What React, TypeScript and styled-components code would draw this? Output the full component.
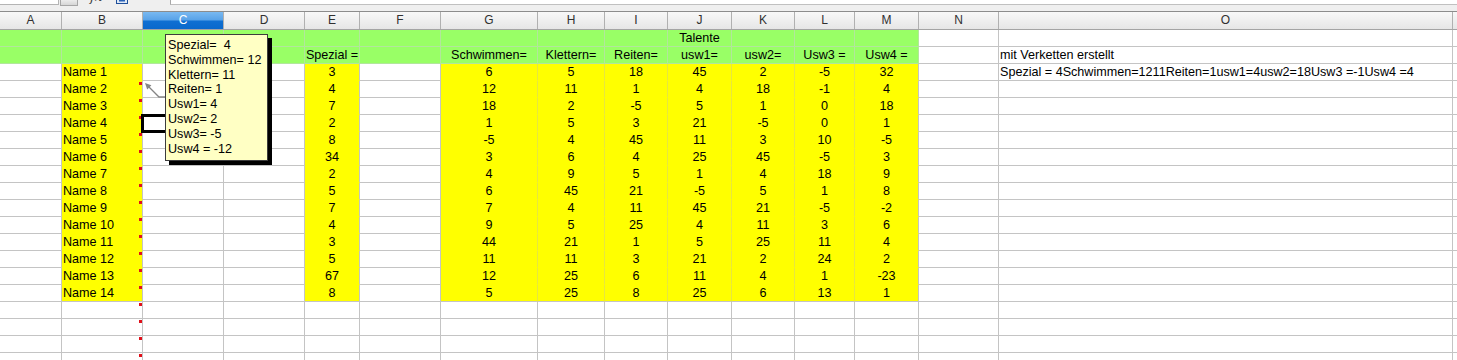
import React from 'react';
import styled, { createGlobalStyle, css } from 'styled-components';

const GlobalStyle = createGlobalStyle`
  html, body { margin: 0; padding: 0; background: #ffffff; overflow: hidden; }
  body { font-family: "Liberation Sans", Arial, sans-serif; }
`;

const COLS = [62, 81, 81, 81, 55, 81, 97, 67, 63, 64, 63, 60, 64, 80, 454, 60];
const LETTERS = ['A', 'B', 'C', 'D', 'E', 'F', 'G', 'H', 'I', 'J', 'K', 'L', 'M', 'N', 'O', ''];
const TEMPLATE = COLS.map((w) => `${w}px`).join(' ');

const GREEN = '#99ff66';
const YELLOW = '#ffff00';
const GRID = '#c4c4c4';
const GREEN_LINE = '#b2e69c';
const YELLOW_LINE = '#e6e640';

type Bg = 'white' | 'green' | 'yellow';
interface CellData {
  text?: string;
  bg: Bg;
  align: 'left' | 'center';
}

const Page = styled.div`
  position: relative;
  width: 1457px;
  height: 360px;
  overflow: hidden;
  background: #ffffff;
`;

const Toolbar = styled.div`
  display: flex;
  align-items: flex-start;
  height: 11px;
  background: #efefef;
  overflow: hidden;
`;

const ToolLeft = styled.div`
  display: flex;
  align-items: flex-start;
  width: 170px;
  flex: none;
`;

const NameBox = styled.div`
  width: 58px;
  height: 4px;
  background: #ffffff;
  border-right: 1px solid #b4b4b4;
  border-bottom: 1px solid #b4b4b4;
`;

const DropButton = styled.div`
  width: 16px;
  height: 5px;
  margin-left: 1px;
  background: linear-gradient(#ececec, #d6d6d6);
  border: 1px solid #a6a6a6;
  border-top: none;
`;

const FxGlyph = styled.span`
  margin-left: 12px;
  margin-top: -11px;
  font-family: "DejaVu Serif", serif;
  font-style: italic;
  font-size: 13px;
  line-height: 16px;
  color: #3a3a3a;
`;

const SumIcon = styled.svg`
  margin-left: 14px;
  flex: none;
`;

const FormulaInput = styled.div`
  flex: 1;
  height: 4px;
  background: #ffffff;
  border-left: 1px solid #a8a8a8;
  border-bottom: 1px solid #c0c0c0;
`;

const HeaderRow = styled.div`
  display: grid;
  grid-template-columns: ${TEMPLATE};
  border-top: 1px solid #8c8c8c;
  border-bottom: 1px solid #a4a4a4;
`;

const HeaderCell = styled.div<{ $selected?: boolean }>`
  height: 17px;
  border-right: 1px solid #b0b0b0;
  background: linear-gradient(#f8f8f8, #e6e6e6);
  color: #303030;
  font-size: 12px;
  line-height: 17px;
  text-align: center;
  ${(p) =>
    p.$selected &&
    css`
      background: linear-gradient(#79b9f1 0%, #5aa3e8 45%, #0f6fd2 55%, #0a68cc 100%);
      color: #ffffff;
    `}
`;

const SheetGrid = styled.div`
  display: grid;
  grid-template-columns: ${TEMPLATE};
  grid-auto-rows: 17px;
`;

const Cell = styled.div<{ $bg: string; $right: string; $bottom: string; $align: string; $centered: boolean }>`
  position: relative;
  height: 16px;
  background: ${(p) => p.$bg};
  border-right: 1px solid ${(p) => p.$right};
  border-bottom: 1px solid ${(p) => p.$bottom};
  font-size: 12.6px;
  line-height: 16px;
  color: #000000;
  text-align: ${(p) => p.$align};
  padding: ${(p) => (p.$centered ? '0' : '0 1px')};
  white-space: pre;
`;

const NoteMark = styled.span`
  position: absolute;
  top: 1px;
  right: 0;
  width: 3px;
  height: 3px;
  background: #e0101a;
`;

const CursorFrame = styled.span`
  position: absolute;
  top: -1px;
  left: -2px;
  right: -2px;
  bottom: -2px;
  border: 3px solid #000000;
  z-index: 2;
`;

const Comment = styled.div`
  position: absolute;
  left: 165px;
  top: 34px;
  width: 103px;
  height: 127px;
  box-sizing: border-box;
  background: #ffffc4;
  border: 1px solid #3c3c3c;
  box-shadow: 4px 4px 0 #000000;
  padding: 3px 0 0 2px;
  font-size: 12.6px;
  line-height: 14.8px;
  color: #000000;
  z-index: 5;
`;

const CommentLine = styled.div`
  white-space: pre;
`;

const Callout = styled.svg`
  position: absolute;
  left: 140px;
  top: 78px;
  z-index: 4;
`;

const namesE = [3, 4, 7, 2, 8, 34, 2, 5, 7, 4, 3, 5, 67, 8];
const dataGM = [
  [6, 5, 18, 45, 2, -5, 32],
  [12, 11, 1, 4, 18, -1, 4],
  [18, 2, -5, 5, 1, 0, 18],
  [1, 5, 3, 21, -5, 0, 1],
  [-5, 4, 45, 11, 3, 10, -5],
  [3, 6, 4, 25, 45, -5, 3],
  [4, 9, 5, 1, 4, 18, 9],
  [6, 45, 21, -5, 5, 1, 8],
  [7, 4, 11, 45, 21, -5, -2],
  [9, 5, 25, 4, 11, 3, 6],
  [44, 21, 1, 5, 25, 11, 4],
  [11, 11, 3, 21, 2, 24, 2],
  [12, 25, 6, 11, 4, 1, -23],
  [5, 25, 8, 25, 6, 13, 1],
];

const blankRow = (): CellData[] => COLS.map(() => ({ bg: 'white', align: 'center' }));

function buildRows(): CellData[][] {
  const rows: CellData[][] = [];
  const g1 = blankRow();
  for (let c = 0; c < 13; c++) g1[c].bg = 'green';
  g1[9].text = 'Talente';
  rows.push(g1);

  const g2 = blankRow();
  for (let c = 0; c < 13; c++) g2[c].bg = 'green';
  g2[4].text = 'Spezial =';
  const heads = ['Schwimmen=', 'Klettern=', 'Reiten=', 'usw1=', 'usw2=', 'Usw3 =', 'Usw4 ='];
  heads.forEach((h, i) => (g2[6 + i].text = h));
  g2[14] = { bg: 'white', align: 'left', text: 'mit Verketten erstellt' };
  rows.push(g2);

  for (let r = 0; r < 14; r++) {
    const row = blankRow();
    row[1] = { bg: 'yellow', align: 'left', text: `Name ${r + 1}` };
    row[4] = { bg: 'yellow', align: 'center', text: String(namesE[r]) };
    dataGM[r].forEach((v, i) => (row[6 + i] = { bg: 'yellow', align: 'center', text: String(v) }));
    if (r === 0) {
      row[14] = {
        bg: 'white',
        align: 'left',
        text: 'Spezial = 4Schwimmen=1211Reiten=1usw1=4usw2=18Usw3 =-1Usw4 =4',
      };
    }
    rows.push(row);
  }
  for (let r = 0; r < 4; r++) rows.push(blankRow());
  return rows;
}

const ROWS = buildRows();

const bgColor = (b: Bg) => (b === 'green' ? GREEN : b === 'yellow' ? YELLOW : '#ffffff');

function rightColor(row: CellData[], c: number) {
  const cell = row[c];
  if (cell.bg === 'green') return GREEN_LINE;
  if (cell.bg === 'yellow') return row[c + 1] && row[c + 1].bg === 'yellow' ? YELLOW_LINE : GRID;
  return GRID;
}

function bottomColor(r: number, c: number) {
  const cell = ROWS[r][c];
  if (cell.bg === 'green') return GREEN_LINE;
  if (cell.bg === 'yellow') return ROWS[r + 1] && ROWS[r + 1][c].bg === 'yellow' ? YELLOW : GRID;
  return GRID;
}

const commentLines = [
  'Spezial=  4',
  'Schwimmen= 12',
  'Klettern= 11',
  'Reiten= 1',
  'Usw1= 4',
  'Usw2= 2',
  'Usw3= -5',
  'Usw4 = -12',
];

export default function App() {
  return (
    <>
      <GlobalStyle />
      <Page>
        <Toolbar>
          <ToolLeft>
            <NameBox />
            <DropButton />
            <FxGlyph>fx</FxGlyph>
            <SumIcon width="12" height="4" viewBox="0 0 12 4">
              <rect x="0.5" y="-2" width="11" height="5.5" fill="#dfe9f6" stroke="#1f4f9a" strokeWidth="1" />
              <rect x="3" y="0" width="6" height="1.5" fill="#2a62b8" />
            </SumIcon>
          </ToolLeft>
          <FormulaInput />
        </Toolbar>
        <HeaderRow>
          {LETTERS.map((l, i) => (
            <HeaderCell key={`h${i}`} $selected={i === 2}>
              {l}
            </HeaderCell>
          ))}
        </HeaderRow>
        <SheetGrid>
          {ROWS.map((row, r) =>
            row.map((cell, c) => (
              <Cell
                key={`${r}-${c}`}
                $bg={bgColor(cell.bg)}
                $right={rightColor(row, c)}
                $bottom={bottomColor(r, c)}
                $align={cell.align}
                $centered={cell.align === 'center'}
              >
                {cell.text}
                {c === 1 && r >= 3 && <NoteMark />}
                {c === 2 && r === 5 && <CursorFrame />}
              </Cell>
            ))
          )}
        </SheetGrid>
        <Callout width="30" height="24" viewBox="0 0 30 24">
          <polyline points="8,8 19,19 26,19" fill="none" stroke="#858585" strokeWidth="1.3" />
          <polygon points="5,5 7.2,11.4 11.4,7.2" fill="#858585" />
        </Callout>
        <Comment>
          {commentLines.map((t) => (
            <CommentLine key={t}>{t}</CommentLine>
          ))}
        </Comment>
      </Page>
    </>
  );
}
